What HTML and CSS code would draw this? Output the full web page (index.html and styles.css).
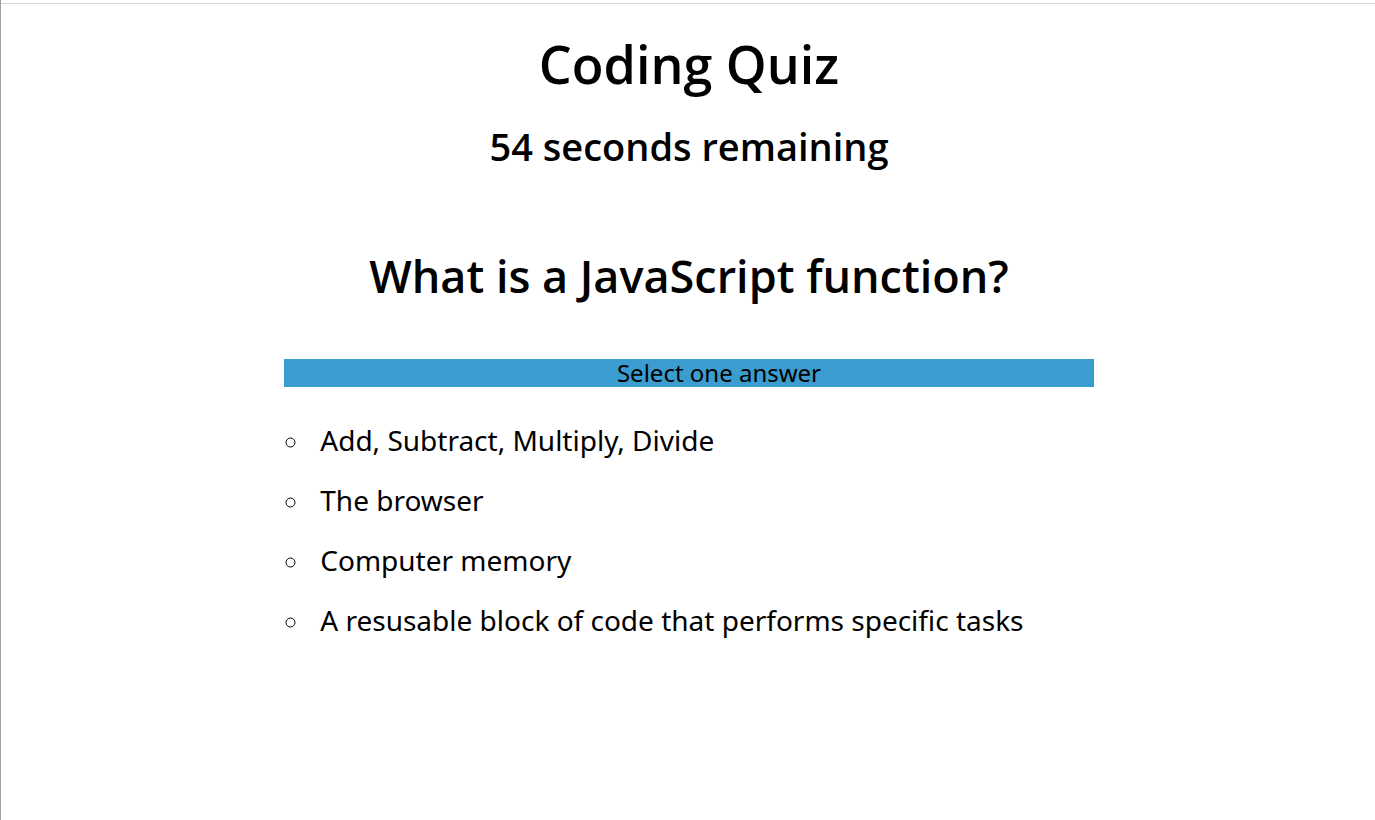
FILE: index.html
```html
<!DOCTYPE html>
<html lang="en">
<head>
<meta charset="utf-8">
<title>Coding Quiz</title>
<link rel="stylesheet" href="styles.css">
</head>
<body>
<main class="quiz">
<h1 class="title">Coding Quiz</h1>
<p class="timer">54 seconds remaining</p>
<h2 class="question">What is a JavaScript function?</h2>
<section class="panel">
<p class="prompt">Select one answer</p>
<ul class="answers">
<li>Add, Subtract, Multiply, Divide</li>
<li>The browser</li>
<li>Computer memory</li>
<li>A resusable block of code that performs specific tasks</li>
</ul>
</section>
</main>
</body>
</html>
```
FILE: styles.css
```css
body {
  box-sizing: border-box;
  min-height: 100vh;
  margin: 0;
  padding-top: 3px;
  border-left: 1px solid #a0a0a0;
  background: #fff;
  color: #000;
  font-family: "Noto Sans", "Open Sans", sans-serif;
}
.quiz {
  border-top: 1px solid #d8d8d8;
  padding: 24px 0 0 2px;
  text-align: center;
}
.title, .timer, .question, .prompt, .answers { margin: 0; }
.title, .timer, .question {
  font-family: "Open Sans", "Noto Sans", sans-serif;
  font-weight: 600;
}
.title { font-size: 52px; line-height: 72px; }
.timer { margin-top: 20px; font-size: 38px; line-height: 52px; }
.question { margin-top: 72px; font-size: 45px; line-height: 64px; }
.panel { width: 59%; margin: 51px auto 0; }
.prompt {
  padding-left: 60px;
  background: #3b9ccf;
  font-size: 24px;
  line-height: 28px;
}
.answers {
  margin-top: 23px;
  padding-left: 26px;
  list-style: circle;
  text-align: left;
  font-size: 28px;
  line-height: 60px;
}
.answers li { padding-left: 10px; }
.answers li::marker { font-size: 24px; }
```
